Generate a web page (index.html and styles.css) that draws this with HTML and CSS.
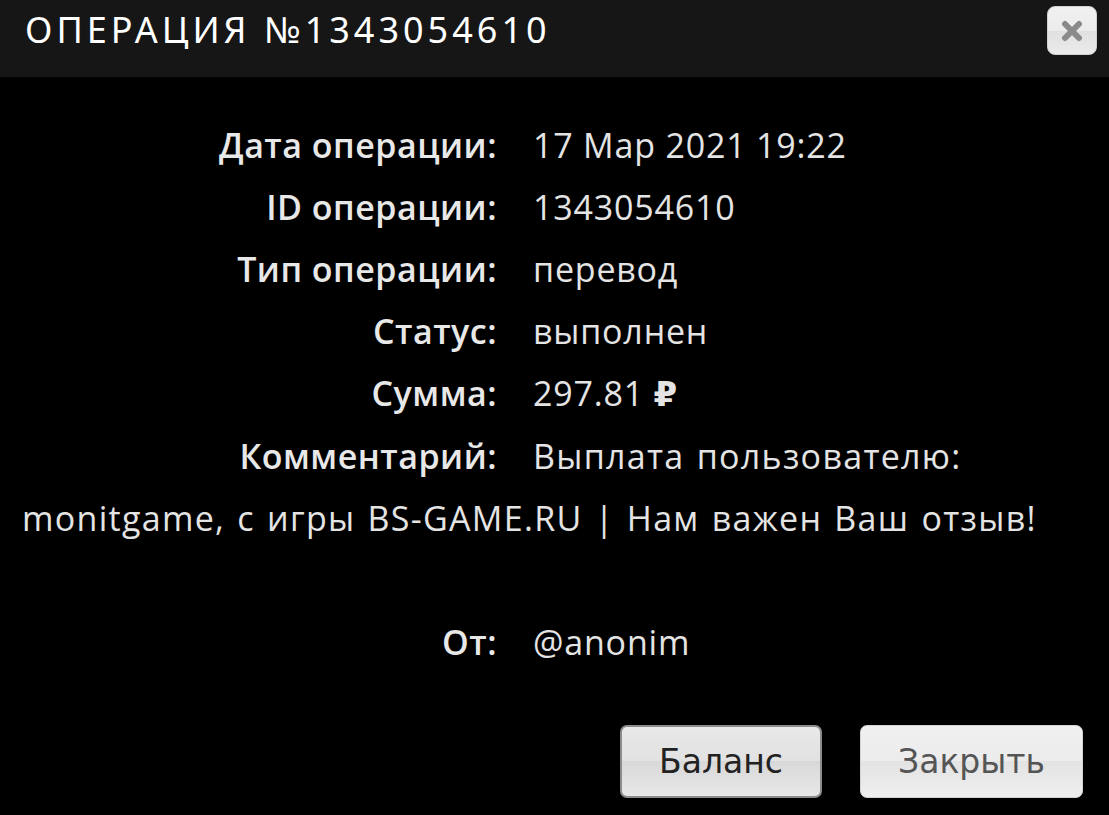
FILE: index.html
```html
<!DOCTYPE html>
<html lang="ru">
<head>
    <meta charset="UTF-8">
    <meta name="viewport" content="width=device-width, initial-scale=1.0">
    <title>Операция №1343054610</title>
    <link rel="stylesheet" href="styles.css">
</head>
<body>
    <div class="dialog">
        <div class="titlebar">
            <div class="title">ОПЕРАЦИЯ №1343054610</div>
            <button class="close" title="Закрыть">
                <svg width="22" height="22" viewBox="0 0 22 22">
                    <path d="M4 4 L18 18 M18 4 L4 18" stroke="#8a8a8a" stroke-width="6" stroke-linecap="round"/>
                </svg>
            </button>
        </div>
        <div class="content">
            <div class="row"><span class="label">Дата операции:</span>17 Мар 2021 19:22</div>
            <div class="row"><span class="label">ID операции:</span>1343054610</div>
            <div class="row"><span class="label">Тип операции:</span>перевод</div>
            <div class="row"><span class="label">Статус:</span>выполнен</div>
            <div class="row"><span class="label">Сумма:</span>297.81 <span class="rub">₽</span></div>
            <div class="row row-comment"><span class="label">Комментарий:</span>Выплата пользователю: monitgame, с игры BS-GAME.RU | Нам важен Ваш отзыв!<br><br></div>
            <div class="row"><span class="label">От:</span>@anonim</div>
        </div>
        <div class="buttons">
            <button class="btn btn-primary">Баланс</button>
            <button class="btn">Закрыть</button>
        </div>
    </div>
</body>
</html>
```

FILE: styles.css
```css
* {
    margin: 0;
    padding: 0;
    box-sizing: border-box;
}
html, body {
    height: 100%;
    width: 100%;
    background: #000;
}
.dialog {
    height: 100vh;
    display: flex;
    flex-direction: column;
}
.titlebar {
    height: 77px;
    background-color: #161616;
    display: flex;
    justify-content: space-between;
    align-items: flex-start;
    padding: 0 12px 0 25px;
}
.title {
    font-family: 'Noto Sans', sans-serif;
    font-size: 36px;
    line-height: 60px;
    letter-spacing: 4px;
    color: #fff;
}
.close {
    margin-top: 6px;
    width: 50px;
    height: 49px;
    border: 1px solid #d0d0d0;
    border-radius: 8px;
    background: linear-gradient(#f0f0f0 0%, #ececec 50%, #e0e0e0 50%, #ebebeb 100%);
    display: flex;
    align-items: center;
    justify-content: center;
    cursor: pointer;
}
.content {
    padding: 37px 20px 0 22px;
    font-family: 'Open Sans', sans-serif;
    font-size: 34px;
    letter-spacing: 0.8px;
    line-height: 62px;
    color: #e4e4e4;
}
.label {
    display: inline-block;
    width: 475px;
    margin-right: 36px;
    text-align: right;
    font-weight: 600;
    letter-spacing: 0.5px;
    color: #e8e8e8;
}
.row-comment {
    letter-spacing: 1.3px;
    word-spacing: 2px;
}
.rub {
    font-family: 'DejaVu Sans', sans-serif;
    font-weight: 700;
    font-size: 34px;
}
.buttons {
    display: flex;
    justify-content: flex-end;
    gap: 38px;
    padding: 0 26px 0 0;
    margin-top: 52px;
}
.btn {
    height: 73px;
    width: 223px;
    font-family: 'DejaVu Sans', sans-serif;
    font-size: 33px;
    color: #555;
    border: 1px solid #d3d3d3;
    border-radius: 7px;
    background: linear-gradient(#f0f0f0 0%, #ececec 50%, #e3e3e3 50%, #efefef 100%);
    cursor: pointer;
}
.btn-primary {
    width: 202px;
    color: #222;
    border: 2px solid #8c8c8c;
    background: linear-gradient(#e8e8e8 0%, #e2e2e2 50%, #d8d8d8 50%, #e8e8e8 100%);
}
```
